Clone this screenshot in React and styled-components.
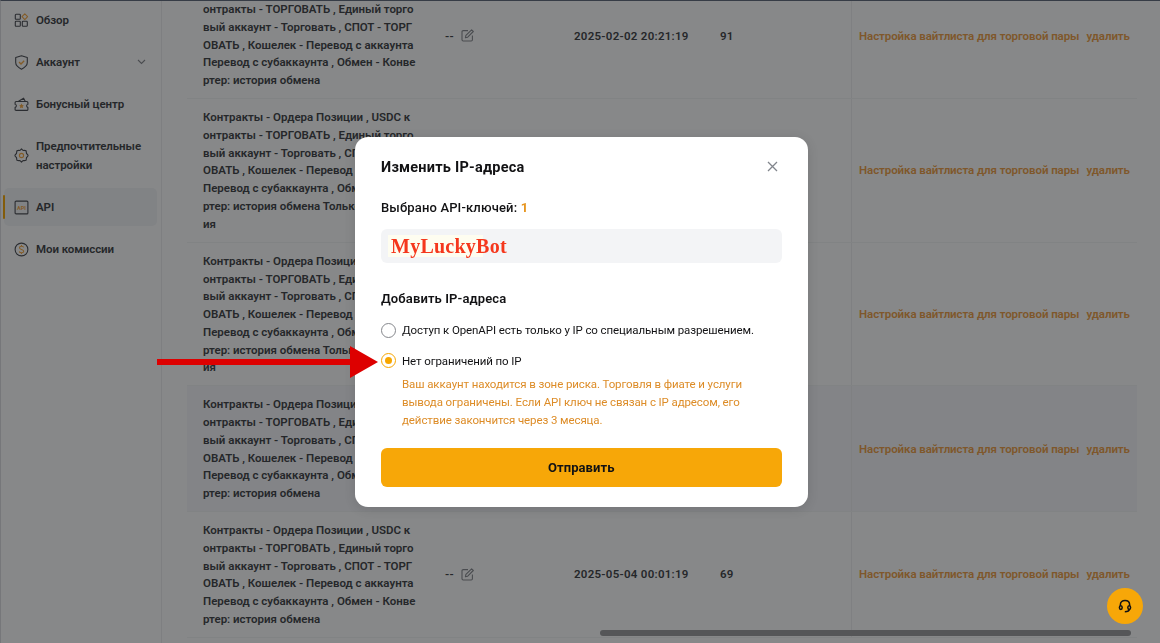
import React from 'react';
import styled, { createGlobalStyle } from 'styled-components';

const GlobalStyle = createGlobalStyle`
  * {
    box-sizing: border-box;
  }

  body {
    margin: 0;
    overflow: hidden;
    background-color: #fff;
    color: #3a3c41;
    font-family: Roboto, 'Noto Sans', 'Liberation Sans', sans-serif;
    font-size: 11.5px;
  }
`;

const Page = styled.div`
  display: flex;
  width: 1160px;
  height: 643px;
  overflow: hidden;
  border-top: 1px solid #5d6678;
  border-left: 1px solid #dcdde0;
`;

const Sidebar = styled.nav`
  width: 161px;
  flex-shrink: 0;
  border-right: 1px solid #ecedef;
  padding-left: 3px;
`;

const MenuItem = styled.div`
  display: flex;
  align-items: center;
  position: relative;
  width: 153px;
  height: ${props => props.$tall ? '57px' : '38px'};
  margin-bottom: 4px;
  padding-left: 10px;
  border-radius: 5px;
  background-color: ${props => props.$active ? '#f3f4f6' : 'transparent'};

  &::before {
    content: '';
    display: ${props => props.$active ? 'block' : 'none'};
    position: absolute;
    left: -1px;
    top: 7px;
    width: 2px;
    height: 24px;
    border-radius: 1px;
    background-color: #f7a600;
  }

  > svg {
    flex-shrink: 0;
  }
`;

const MenuLabel = styled.span`
  flex: 1;
  margin-left: 7px;
  padding-top: 1.5px;
  font-weight: 600;
  line-height: 19.5px;
  letter-spacing: -0.08px;
  white-space: pre-line;
`;

const Content = styled.main`
  width: 950px;
  margin-left: 25px;
  flex-shrink: 0;
`;

const Row = styled.div`
  display: flex;
  align-items: stretch;
  margin-top: ${props => props.$first ? '-9.9px' : '0'};
  border-bottom: 1px solid #f3f4f5;
  background-color: ${props => props.$hover ? '#f7f7fa' : 'transparent'};
`;

const Cell = styled.div`
  display: flex;
  align-items: center;
  flex-shrink: 0;
  width: ${props => props.$width};
  font-weight: 600;
  letter-spacing: 0.27px;
`;

const Permissions = styled.div`
  flex-shrink: 0;
  width: 258px;
  padding: 10.1px 0 8.2px 16px;
  font-weight: 600;
  line-height: 17.75px;
  letter-spacing: -0.02px;
  white-space: pre;
`;

const Actions = styled.div`
  display: flex;
  align-items: center;
  flex: 1;
  padding-left: 7px;
  gap: 7px;
  border-left: 1px solid #eeeff1;
  color: #ee9d42;
  font-weight: 600;
  letter-spacing: -0.08px;
  white-space: nowrap;
`;

const EditIcon = styled.svg`
  margin-left: 7px;
`;

const Scrollbar = styled.div`
  position: absolute;
  left: 600px;
  top: 630px;
  width: 531px;
  height: 6px;
  border-radius: 3px;
  background-color: #9a9b9d;
`;

const Overlay = styled.div`
  position: fixed;
  inset: 0;
  background-color: rgba(15, 17, 20, 0.5);
`;

const Modal = styled.div`
  position: absolute;
  left: 355px;
  top: 137px;
  width: 452.5px;
  height: 369.5px;
  padding: 20px 26px 0;
  border-radius: 13px;
  background-color: #fff;
  color: #121214;
  box-shadow: 0 2px 12px rgba(0, 0, 0, 0.12);
`;

const ModalHeader = styled.div`
  display: flex;
  align-items: center;
  justify-content: space-between;
  height: 20px;
`;

const Title = styled.h2`
  margin: 0;
  font-size: 14.5px;
  font-weight: 700;
  letter-spacing: 0.23px;
`;

const CloseIcon = styled.svg`
  margin: 0 4px 1px 0;
`;

const Selected = styled.div`
  margin-top: 20.5px;
  font-size: 13px;
  font-weight: 500;
  line-height: 20px;
  letter-spacing: 0.15px;

  span {
    color: #e7951f;
    font-weight: 700;
  }
`;

const KeyBox = styled.div`
  display: flex;
  align-items: center;
  height: 34px;
  margin-top: 11.5px;
  padding-left: 7px;
  border-radius: 6px;
  background-color: #f3f4f6;
`;

const KeyName = styled.span`
  width: 95px;
  height: 22px;
  padding-left: 3px;
  background-color: #fefdf0;
  color: #f5371c;
  font-family: 'Liberation Serif', serif;
  font-size: 20px;
  font-weight: 700;
  line-height: 22px;
  letter-spacing: 0.25px;
  white-space: nowrap;
`;

const SectionTitle = styled.div`
  margin-top: 26px;
  font-size: 13px;
  font-weight: 600;
  line-height: 20px;
  letter-spacing: 0.12px;
`;

const Option = styled.label`
  display: flex;
  align-items: center;
  height: 20px;
  margin-top: ${props => props.$gap};
  letter-spacing: -0.1px;
  white-space: nowrap;
`;

const Radio = styled.span`
  display: flex;
  align-items: center;
  justify-content: center;
  flex-shrink: 0;
  width: 15px;
  height: 15px;
  margin-right: 6px;
  border: 1px solid ${props => props.$checked ? '#f7a600' : '#85878c'};
  border-radius: 50%;

  &::after {
    content: '';
    width: 7px;
    height: 7px;
    border-radius: 50%;
    background-color: ${props => props.$checked ? '#f7a600' : 'transparent'};
  }
`;

const Warning = styled.p`
  margin: 5.7px 0 0 21px;
  color: #dd8c27;
  line-height: 17.75px;
  letter-spacing: -0.1px;
  white-space: pre;
`;

const SubmitButton = styled.button`
  display: block;
  width: 100%;
  height: 39px;
  margin-top: 18.75px;
  border: none;
  border-radius: 6px;
  background-color: #f7a708;
  color: #121214;
  font-family: inherit;
  font-size: 13px;
  font-weight: 700;
  letter-spacing: 0.1px;
`;

const Arrow = styled.svg`
  position: absolute;
  left: 157px;
  top: 346px;
`;

const SupportButton = styled.button`
  display: flex;
  align-items: center;
  justify-content: center;
  position: absolute;
  left: 1107px;
  top: 588px;
  width: 36px;
  height: 36px;
  padding: 0;
  border: none;
  border-radius: 50%;
  background-color: #f7a708;
`;

const iconProps = { width: 15, height: 15, viewBox: '0 0 15 15', fill: 'none', stroke: '#46484e', strokeWidth: 1.1 };

const OverviewIcon = () => (
  <svg {...iconProps}>
    <rect x="1.3" y="1.3" width="5" height="5" rx="0.8" />
    <rect x="1.3" y="8.3" width="5" height="5" rx="0.8" />
    <rect x="8.3" y="8.3" width="5" height="5" rx="0.8" />
    <path d="M10.8 0.8 L13.6 3.7 L10.8 6.6 L8 3.7 Z" stroke="#f7a63c" strokeLinejoin="round" />
  </svg>
);

const ShieldIcon = () => (
  <svg {...iconProps}>
    <path d="M7.5 0.8 L13.3 2.5 V7.5 C13.3 10.5 10.5 12.7 7.5 14.2 C4.5 12.7 1.7 10.5 1.7 7.5 V2.5 Z" strokeLinejoin="round" />
    <path d="M5 7 L7 9 L10.2 5.8" stroke="#f7a63c" strokeWidth="1.3" />
  </svg>
);

const BonusIcon = () => (
  <svg {...iconProps}>
    <path d="M2.1 4.5 H12.9 Q13.9 4.5 13.9 5.5 V7.2 C12.2 7.4 12.2 10.2 13.9 10.4 V12.4 Q13.9 13.4 12.9 13.4 H2.1 Q1.1 13.4 1.1 12.4 V10.4 C2.8 10.2 2.8 7.4 1.1 7.2 V5.5 Q1.1 4.5 2.1 4.5 Z" strokeLinejoin="round" />
    <path d="M4.5 4.2 L9.6 1.2 L11.2 4.2" strokeLinejoin="round" />
    <path d="M7.5 6.6 L8.3 8.1 L9.9 8.4 L8.7 9.5 L9 11.2 L7.5 10.4 L6 11.2 L6.3 9.5 L5.1 8.4 L6.7 8.1 Z" fill="#f7a63c" stroke="none" />
  </svg>
);

const SettingsIcon = () => (
  <svg {...iconProps}>
    <path d="M7.5 0.9 Q8.6 2.4 9.4 2.5 Q10.5 2.1 12.1 2.8 Q12.4 4.6 12.5 5.5 Q14 6.6 14.1 7.5 Q14 8.4 12.5 9.5 Q12.4 10.4 12.1 12.2 Q10.5 12.9 9.4 12.5 Q8.6 12.6 7.5 14.1 Q6.4 12.6 5.6 12.5 Q4.5 12.9 2.9 12.2 Q2.6 10.4 2.5 9.5 Q1 8.4 0.9 7.5 Q1 6.6 2.5 5.5 Q2.6 4.6 2.9 2.8 Q4.5 2.1 5.6 2.5 Q6.4 2.4 7.5 0.9 Z" strokeLinejoin="round" />
    <circle cx="7.5" cy="7.5" r="2.1" stroke="#f7a63c" />
  </svg>
);

const ApiIcon = () => (
  <svg {...iconProps}>
    <rect x="1.1" y="1.1" width="12.8" height="12.8" rx="1" />
    <text x="7.5" y="9.6" fill="#f7a63c" stroke="none" fontSize="5.5" fontWeight="700" textAnchor="middle">API</text>
  </svg>
);

const CommissionIcon = () => (
  <svg {...iconProps}>
    <circle cx="7.5" cy="7.5" r="6.4" />
    <path d="M9.7 5.4 C9.2 3.8 5.5 3.8 5.5 5.7 C5.5 7.9 9.7 6.9 9.7 9.3 C9.7 11.2 5.8 11.2 5.3 9.5 M7.5 3 V4.3 M7.5 10.7 V12" stroke="#f7a63c" />
  </svg>
);

const menu = [
  { label: 'Обзор', icon: <OverviewIcon /> },
  { label: 'Аккаунт', icon: <ShieldIcon />, expandable: true },
  { label: 'Бонусный центр', icon: <BonusIcon /> },
  { label: 'Предпочтительные\nнастройки', icon: <SettingsIcon />, tall: true },
  { label: 'API', icon: <ApiIcon />, active: true },
  { label: 'Мои комиссии', icon: <CommissionIcon /> },
];

const permissionLines = [
  'Контракты - Ордера Позиции , USDC к',
  'онтракты - ТОРГОВАТЬ , Единый торго',
  'вый аккаунт - Торговать , СПОТ - ТОРГ',
  'ОВАТЬ , Кошелек - Перевод с аккаунта',
  'Перевод с субаккаунта , Обмен - Конве',
  'ртер: история обмена',
];

const basePermissions = permissionLines.join('\n');
const readPermissions = `${basePermissions} Только для чтен\nия`;

const keys = [
  // the first row is scrolled, its top line is out of view
  { id: 1, permissions: permissionLines.slice(1).join('\n'), date: '2025-02-02 20:21:19', days: '91' },
  { id: 2, permissions: readPermissions },
  { id: 3, permissions: readPermissions },
  { id: 4, permissions: basePermissions, hover: true },
  { id: 5, permissions: basePermissions, date: '2025-05-04 00:01:19', days: '69' },
];

const RowCells = styled.div`
  display: flex;
  flex: 1;
  margin-top: ${props => props.$first ? '-17.75px' : '0'};
`;

const KeyRow = ({ item, first }) => (
  <Row $first={first} $hover={item.hover}>
    <Permissions>{item.permissions}</Permissions>
    <RowCells $first={first}>
      <Cell $width="129px">
        {item.date && (
          <>
            --
            <EditIcon width="13" height="13" viewBox="0 0 13 13" fill="none" stroke="#85878c" strokeWidth="1.1">
              <path d="M7 1.6 H2.2 Q1 1.6 1 2.8 V10.8 Q1 12 2.2 12 H10.2 Q11.4 12 11.4 10.8 V6.5" />
              <path d="M4.4 8.8 L4.9 6.4 L10.6 0.8 L12.3 2.5 L6.7 8.2 Z" strokeLinejoin="round" />
            </EditIcon>
          </>
        )}
      </Cell>
      <Cell $width="146px">{item.date}</Cell>
      <Cell $width="131px">{item.days}</Cell>
      <Actions>
        <span>Настройка вайтлиста для торговой пары</span>
        <span>удалить</span>
      </Actions>
    </RowCells>
  </Row>
);

const App = () => {
  return (
    <>
      <GlobalStyle />
      <Page>
        <Sidebar>
          {menu.map(item => (
            <MenuItem key={item.label} $active={item.active} $tall={item.tall}>
              {item.icon}
              <MenuLabel>{item.label}</MenuLabel>
              {item.expandable && (
                <svg width="22" height="8" viewBox="0 0 22 8" fill="none" stroke="#85878c" strokeWidth="1.1">
                  <path d="M3 2 L6.5 5.5 L10 2" />
                </svg>
              )}
            </MenuItem>
          ))}
        </Sidebar>
        <Content>
          {keys.map((item, index) => (
            <KeyRow key={item.id} item={item} first={index === 0} />
          ))}
        </Content>
        <Scrollbar />
      </Page>
      <Overlay />
      <Modal>
        <ModalHeader>
          <Title>Изменить IP-адреса</Title>
          <CloseIcon width="11" height="11" viewBox="0 0 11 11" stroke="#81858c" strokeWidth="1.3">
            <path d="M1 1 L10 10 M10 1 L1 10" />
          </CloseIcon>
        </ModalHeader>
        <Selected>Выбрано API-ключей: <span>1</span></Selected>
        <KeyBox>
          <KeyName>MyLuckyBot</KeyName>
        </KeyBox>
        <SectionTitle>Добавить IP-адреса</SectionTitle>
        <Option $gap="11px">
          <Radio />
          Доступ к OpenAPI есть только у IP со специальным разрешением.
        </Option>
        <Option $gap="10.7px">
          <Radio $checked />
          Нет ограничений по IP
        </Option>
        <Warning>
          {'Ваш аккаунт находится в зоне риска. Торговля в фиате и услуги\nвывода ограничены. Если API ключ не связан с IP адресом, его\nдействие закончится через 3 месяца.'}
        </Warning>
        <SubmitButton type="button">Отправить</SubmitButton>
      </Modal>
      <Arrow width="222" height="32" viewBox="0 0 222 32" fill="#dd0000">
        <path d="M0 13 H193 V0 L221 16 L193 32 V19 H0 Z" />
      </Arrow>
      <SupportButton type="button" aria-label="support">
        <svg width="14" height="14" viewBox="0 0 14 14" fill="none" stroke="#121214" strokeWidth="1.5">
          <path d="M2.4 7 V5.5 C2.4 3 4.4 1.4 7 1.4 C9.6 1.4 11.6 3 11.6 5.5 V7" />
          <ellipse cx="2.8" cy="8.6" rx="1.4" ry="1.9" />
          <ellipse cx="11.2" cy="8.6" rx="1.4" ry="1.9" />
          <path d="M11.4 10.2 C11.2 12 9.8 12.7 6.8 12.7" />
        </svg>
      </SupportButton>
    </>
  );
};

export default App;
